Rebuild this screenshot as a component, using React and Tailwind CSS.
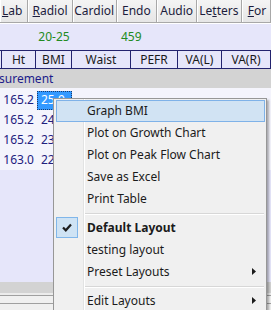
import React from "react";

const font = { fontFamily: '"Noto Sans", "Open Sans", sans-serif' };

function Tab({ w, children, className = "" }) {
  return (
    <div
      className={`h-full flex items-center justify-center border-r border-[#a8a8a8] shadow-[inset_1px_0_0_#ffffff] text-[12px] text-[#1c1c3c] ${className}`}
      style={{ width: w }}
    >
      {children}
    </div>
  );
}

function MenuItem({ children, bold, highlight, arrow, check }) {
  return (
    <div className="relative h-[22px] flex items-center">
      {highlight && (
        <div className="absolute left-[2px] right-[1px] top-0 bottom-0 bg-[#d1e3f3] border border-[#7fb2e8]" />
      )}
      {check && (
        <div className="absolute left-[2px] top-0 w-[22px] h-[21px] bg-[#cfe3f4] border border-[#80b6ea] flex items-center justify-center">
          <svg width="10" height="9" viewBox="0 0 10 9">
            <path d="M1 4.5 L3.8 7.3 L9 1.6" stroke="#1e1e1e" strokeWidth="2.2" fill="none" />
          </svg>
        </div>
      )}
      <span
        className={`relative pl-[33px] text-[12px] leading-none text-[#1b1b1b] ${bold ? "font-bold" : ""}`}
      >
        {children}
      </span>
      {arrow && (
        <svg className="absolute right-[10px] top-[7px]" width="4" height="7" viewBox="0 0 4 7">
          <path d="M0 0 L4 3.5 L0 7 Z" fill="#1b1b1b" />
        </svg>
      )}
    </div>
  );
}

function Sep() {
  return (
    <div className="h-[7px] flex items-center pl-[31px] pr-[2px]">
      <div className="w-full h-[1px] bg-[#d7d7d7] shadow-[0_1px_0_#ffffff]" />
    </div>
  );
}

export default function App() {
  const cols = [
    { w: 2, t: "" },
    { w: 34, t: "Ht" },
    { w: 36, t: "BMI" },
    { w: 59, t: "Waist" },
    { w: 47, t: "PEFR" },
    { w: 44, t: "VA(L)" },
    { w: 49, t: "VA(R)" },
  ];
  const rows = [
    ["165.2", "25.9"],
    ["165.2", "24"],
    ["165.2", "23"],
    ["163.0", "22"],
  ];
  return (
    <div className="relative w-[271px] h-[310px] overflow-hidden bg-[#e6e6fa]" style={font}>
      {/* tab bar */}
      <div className="h-[23px] flex bg-gradient-to-b from-[#f4f4f4] to-[#e6e6e6] border-b border-[#a8a8a8]">
        <Tab w={29} className="justify-start pl-[2px]">
          <span><span className="underline">L</span>ab</span>
        </Tab>
        <Tab w={46}>
          <span><span className="underline">R</span>adiol</span>
        </Tab>
        <Tab w={45}>Cardiol</Tab>
        <Tab w={42}>Endo</Tab>
        <Tab w={41}>Audio</Tab>
        <Tab w={46}>
          <span>Le<span className="underline">t</span>ters</span>
        </Tab>
        <Tab w={30} className="justify-start pl-[6px]">
          <span><span className="underline">F</span>or</span>
        </Tab>
      </div>
      <div className="h-[1px] bg-white" />
      {/* normal ranges */}
      <div className="h-[26px] flex items-center text-[12px] text-[#228b22]">
        <div className="w-[36px]" />
        <div className="w-[36px] text-center">20-25</div>
        <div className="w-[49px]" />
        <div>459</div>
      </div>
      {/* header */}
      <div className="h-[19px] flex border-y border-[#23236e] bg-[#e6e6fa]">
        {cols.map((c, i) => (
          <div
            key={i}
            className="h-full flex items-center justify-center text-[12px] text-[#1a1a1a] border-r border-[#23236e]"
            style={{ width: c.w }}
          >
            {c.t}
          </div>
        ))}
      </div>
      {/* group row */}
      <div className="h-[19px] bg-[#d3d3d3] flex items-center text-[12px] text-[#1c1c8a]">
        <span className="-ml-[1px]">surement</span>
      </div>
      {/* data */}
      <div className="bg-[#f4f4fc] pt-[2px] h-[82px]">
        {rows.map((r, i) => (
          <div key={i} className="h-[20px] flex items-center text-[12px] text-[#23207e]">
            <div className="w-[34px] text-right">{r[0]}</div>
            <div
              className={`ml-[3px] w-[35px] h-[19px] flex items-center pl-[4px] ${
                i === 0 ? "bg-[#3399ff] text-white outline-1 outline-dotted outline-[#1a3a6a] -outline-offset-1" : ""
              }`}
            >
              {r[1]}
            </div>
          </div>
        ))}
      </div>
      <div className="h-[112px]" />
      <div className="h-[11px] bg-[#d3d3d3]" />
      <div className="h-[2px] bg-[#ececec]" />
      <div className="h-[1px] bg-[#a0a0a0]" />
      <div className="h-[7px] bg-[#f0f0f0]" />
      <div className="h-[1px] bg-[#a0a0a0]" />
      <div className="h-[10px] bg-[#f0f0f0]" />

      {/* context menu */}
      <div className="absolute left-[53px] top-[98px] w-[214px] bg-[#f0f0f0] border border-[#979797] shadow-[2px_2px_2px_rgba(0,0,0,0.3)] py-[1px]">
        <div className="absolute left-[29px] top-0 bottom-0 w-[1px] bg-[#e2e3e3] shadow-[1px_0_0_#ffffff]" />
        <MenuItem highlight>Graph BMI</MenuItem>
        <MenuItem>Plot on Growth Chart</MenuItem>
        <MenuItem>Plot on Peak Flow Chart</MenuItem>
        <MenuItem>Save as Excel</MenuItem>
        <MenuItem>Print Table</MenuItem>
        <Sep />
        <MenuItem bold check>Default Layout</MenuItem>
        <MenuItem>testing layout</MenuItem>
        <MenuItem arrow>Preset Layouts</MenuItem>
        <Sep />
        <MenuItem arrow>Edit Layouts</MenuItem>
      </div>
    </div>
  );
}
